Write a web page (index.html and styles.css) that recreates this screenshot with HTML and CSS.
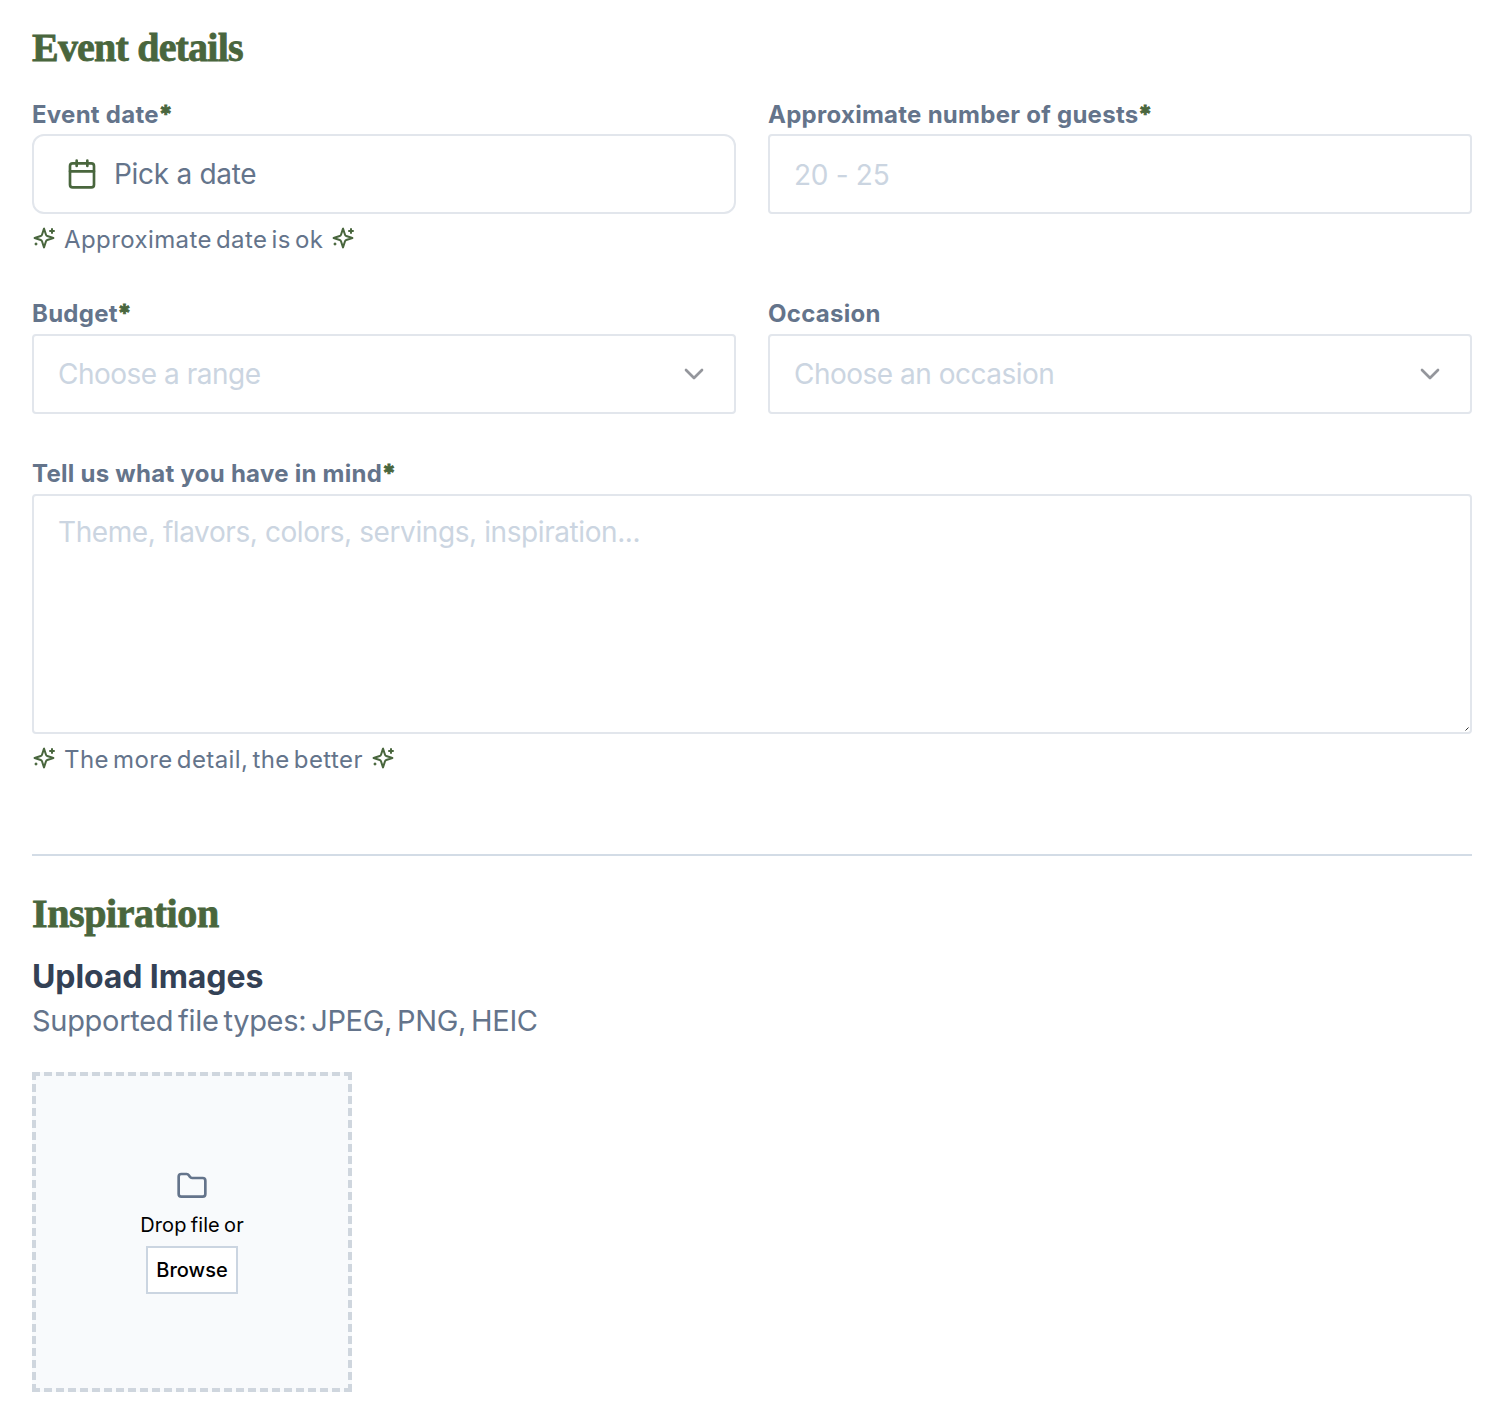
FILE: index.html
```html
<!DOCTYPE html>
<html lang="en">
<head>
  <meta charset="UTF-8" />
  <meta name="viewport" content="width=device-width, initial-scale=1.0"/>
  <title>Event details</title>
  <link rel="stylesheet" href="styles.css">
</head>
<body>
  <!-- shared icons -->
  <svg class="sprite" width="0" height="0">
    <symbol id="sparkles" viewBox="0 0 24 24">
      <path d="m12 2.600-2 6.100a2 2 0 0 1-1.300 1.300L2.600 12l6.100 2a2 2 0 0 1 1.300 1.300l2 6.100 2-6.100a2 2 0 0 1 1.300-1.300l6.100-2-6.100-2a2 2 0 0 1-1.300-1.300Z"/>
      <path d="M20 3v4M22 5h-4M4 17.500v1M4.500 18h-1"/>
    </symbol>
    <symbol id="chevron" viewBox="0 0 24 24">
      <path d="m6 9 6 6 6-6"/>
    </symbol>
  </svg>

  <form class="form">
    <section class="details">
      <h2>Event details</h2>
      <div class="row">
        <div class="field">
          <label class="label">Event date<span class="req">*</span></label>
          <button type="button" class="control date-btn">
            <svg class="icon calendar" viewBox="0 0 24 24"><path d="M8 2v4M16 2v4M3 10h18"/><rect x="3" y="4" width="18" height="18" rx="2"/></svg>
            <span class="date-text">Pick a date</span>
          </button>
          <p class="hint">
            <svg class="icon spark"><use href="#sparkles"/></svg>
            <span>Approximate date is ok</span>
            <svg class="icon spark"><use href="#sparkles"/></svg>
          </p>
        </div>
        <div class="field">
          <label class="label" for="guests">Approximate number of guests<span class="req">*</span></label>
          <input class="control guests" id="guests" type="text" placeholder="20 - 25">
        </div>
      </div>

      <div class="row">
        <div class="field">
          <label class="label">Budget<span class="req">*</span></label>
          <div class="control select">
            <span>Choose a range</span>
            <svg class="icon chevron"><use href="#chevron"/></svg>
          </div>
        </div>
        <div class="field">
          <label class="label">Occasion</label>
          <div class="control select">
            <span>Choose an occasion</span>
            <svg class="icon chevron"><use href="#chevron"/></svg>
          </div>
        </div>
      </div>

      <div class="field">
        <label class="label" for="message">Tell us what you have in mind<span class="req">*</span></label>
        <div class="textarea-wrap">
          <textarea class="control message" id="message" placeholder="Theme, flavors, colors, servings, inspiration..."></textarea>
          <svg class="grip" viewBox="0 0 4 4"><path d="M.5 3.5l3-3"/></svg>
        </div>
        <p class="hint">
          <svg class="icon spark"><use href="#sparkles"/></svg>
          <span>The more detail, the better</span>
          <svg class="icon spark"><use href="#sparkles"/></svg>
        </p>
      </div>
    </section>

    <section class="inspiration">
      <h2>Inspiration</h2>
      <h3>Upload Images</h3>
      <p class="types">Supported file types: JPEG, PNG, HEIC</p>
      <div class="dropzone">
        <svg class="icon folder" viewBox="0 0 24 24"><path d="M20 20a2 2 0 0 0 2-2V8a2 2 0 0 0-2-2h-7.900a2 2 0 0 1-1.690-.9L9.600 3.900A2 2 0 0 0 7.930 3H4a2 2 0 0 0-2 2v13a2 2 0 0 0 2 2Z"/></svg>
        <span class="drop-text">Drop file or</span>
        <button type="button" class="browse">Browse</button>
      </div>
    </section>
  </form>
</body>
</html>
```

FILE: styles.css
```css
* {
  box-sizing: border-box;
}
body {
  margin: 0;
  background: #fff;
  font-family: Inter, sans-serif;
  color: #64748b;
}
h2, h3, p {
  margin: 0;
}
.sprite {
  display: block;
}
.form {
  padding: 20px 32px 32px;
}
h2 {
  height: 56px;
  font-family: "Liberation Serif", serif;
  font-size: 40px;
  line-height: 56px;
  font-weight: bold;
  letter-spacing: -0.8px;
  color: #49663d;
  -webkit-text-stroke: 0.8px #49663d;
}
.inspiration h2 {
  letter-spacing: -0.4px;
}
.details {
  height: 836px;
  border-bottom: 2px solid #d3dce6;
}
.details h2 {
  margin-bottom: 18px;
}
.row {
  display: grid;
  grid-template-columns: 1fr 1fr;
  gap: 32px;
}
.row:nth-of-type(1) {
  height: 200px;
}
.row:nth-of-type(2) {
  height: 160px;
}
.field {
  display: flex;
  flex-direction: column;
}
.label {
  height: 40px;
  line-height: 39px;
  font-size: 24px;
  font-weight: 700;
  letter-spacing: 0.27px;
  white-space: nowrap;
}
.row:nth-of-type(1) .label {
  line-height: 41px;
}
.req {
  color: #49663d;
  -webkit-text-stroke: 0.8px #49663d;
}
.control {
  width: 100%;
  height: 80px;
  border: 2px solid #e2e6ec;
  border-radius: 4px;
  background: #fff;
  font-family: inherit;
  font-size: 28px;
  letter-spacing: -0.5px;
  color: #64748b;
  padding: 0 24px;
}
.control::placeholder {
  color: #cbd5e1;
  opacity: 1;
}
.date-btn {
  display: flex;
  align-items: center;
  gap: 16px;
  padding: 0 32px;
  border-radius: 12px;
  letter-spacing: -0.3px;
}
.guests {
  padding-top: 2px;
  letter-spacing: -0.3px;
}
.icon {
  flex: none;
  fill: none;
  stroke: currentColor;
  stroke-width: 2;
  stroke-linecap: round;
  stroke-linejoin: round;
}
.calendar {
  width: 32px;
  height: 32px;
  color: #49663d;
}
.hint {
  display: flex;
  align-items: center;
  gap: 8px;
  height: 50px;
  font-size: 24px;
  letter-spacing: 0.4px;
  word-spacing: -3px;
  white-space: nowrap;
}
.spark {
  width: 24px;
  height: 24px;
  margin-bottom: 2px;
  color: #49663d;
}
.select {
  display: flex;
  align-items: center;
  justify-content: space-between;
  color: #cbd5e1;
}
.chevron {
  width: 32px;
  height: 32px;
  color: #94969c;
}
.textarea-wrap {
  position: relative;
  height: 240px;
}
.message {
  display: block;
  height: 240px;
  padding: 16px 24px;
  line-height: 40px;
  letter-spacing: -0.41px;
  resize: none;
}
.grip {
  position: absolute;
  right: 3px;
  bottom: 3px;
  width: 4px;
  height: 4px;
  stroke: #333;
}
.inspiration {
  padding-top: 30px;
}
h3 {
  height: 48px;
  margin-top: 10px;
  font-size: 32px;
  line-height: 50px;
  font-weight: 700;
  letter-spacing: -0.1px;
  color: #334155;
}
.types {
  height: 40px;
  font-size: 29px;
  line-height: 42px;
  letter-spacing: -0.3px;
  word-spacing: -3px;
}
.dropzone {
  display: flex;
  flex-direction: column;
  align-items: center;
  justify-content: center;
  width: 320px;
  height: 320px;
  margin-top: 32px;
  border: 4px dashed #cfd6de;
  background: #f8fafc;
  color: #000;
}
.folder {
  width: 32px;
  height: 32px;
  color: #64748b;
}
.drop-text {
  height: 44px;
  line-height: 46px;
  font-size: 20px;
  letter-spacing: 0.1px;
  word-spacing: -1.5px;
}
.browse {
  width: 92px;
  height: 48px;
  padding: 0;
  border: 2px solid #cbd5e1;
  background: #fff;
  font-family: inherit;
  font-size: 20px;
  font-weight: 500;
  color: #000;
}
```
